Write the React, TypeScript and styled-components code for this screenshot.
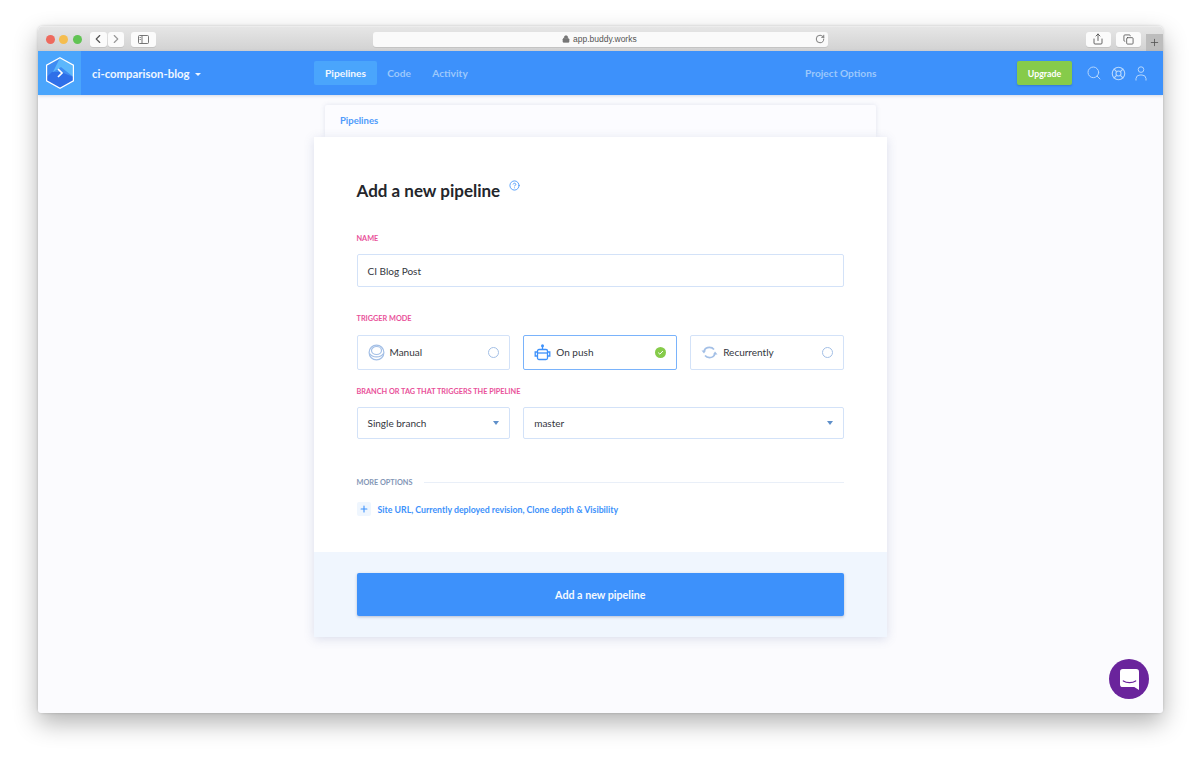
import React from "react";
import styled, { createGlobalStyle } from "styled-components";
import { ChevronLeft, ChevronRight, RotateCw, Search, LifeBuoy, Share, Copy, Plus, Lock, HelpCircle } from "lucide-react";

const GlobalStyle = createGlobalStyle`
  html, body {
    margin: 0;
    padding: 0;
    background: #fff;
  }
  body {
    font-family: Lato, "Liberation Sans", sans-serif;
  }
`;

const Stage = styled.div`
  width: 1200px;
  height: 762px;
  padding: 26px 37px 49px 38px;
  box-sizing: border-box;
  overflow: hidden;
`;

const WindowShadow = styled.div`
  height: 100%;
  border-radius: 5px;
  box-shadow: 0 10px 24px rgba(0, 0, 0, 0.3), 0 0 3px rgba(0, 0, 0, 0.18);
`;

const Window = styled.div`
  position: relative;
  height: 100%;
  display: flex;
  flex-direction: column;
  border-radius: 5px 5px 3px 3px;
  overflow: hidden;
  background: #fbfbfe;
`;

const TitleBar = styled.div`
  height: 25px;
  flex: none;
  display: flex;
  align-items: center;
  padding-left: 8px;
  box-sizing: border-box;
  background: linear-gradient(#e6e6e6, #d2d2d2);
  border-top: 1px solid #ececec;
`;

const Light = styled.span<{ $color: string }>`
  width: 9px;
  height: 9px;
  border-radius: 50%;
  background: ${(p) => p.$color};
  margin-right: 4.3px;
`;

const ToolGroup = styled.div<{ $ml: number }>`
  display: flex;
  gap: 1px;
  margin-left: ${(p) => p.$ml}px;
`;

const ToolButton = styled.div<{ $w: number }>`
  width: ${(p) => p.$w}px;
  height: 15px;
  background: #fbfbfb;
  border-radius: 3px;
  display: flex;
  align-items: center;
  justify-content: center;
  color: #555;
  box-shadow: 0 1px 0 rgba(0, 0, 0, 0.08);
`;

const AddressBar = styled.div`
  width: 455px;
  height: 15px;
  box-sizing: border-box;
  padding-right: 2px;
  margin-left: 217px;
  background: #fafafa;
  border-radius: 3px;
  position: relative;
  display: flex;
  align-items: center;
  justify-content: center;
  gap: 3px;
  font-family: "Liberation Sans", sans-serif;
  font-size: 8.5px;
  color: #555;
  box-shadow: 0 1px 0 rgba(0, 0, 0, 0.08);
`;

const Reload = styled.span`
  position: absolute;
  right: 3px;
  top: 2px;
  color: #666;
  display: flex;
`;

const NewTab = styled.div`
  width: 17px;
  height: 17px;
  align-self: flex-end;
  margin-left: 5px;
  background: #bdbdbd;
  color: #555;
  display: flex;
  align-items: center;
  justify-content: center;
`;

const Nav = styled.div`
  height: 44px;
  flex: none;
  background: #3d91fb;
  display: flex;
  align-items: center;
  color: #fff;
  box-shadow: 0 1px 3px rgba(40, 60, 110, 0.18);
  position: relative;
`;

const LogoBox = styled.div`
  width: 43px;
  height: 44px;
  background: #4aa5fc;
  display: flex;
  align-items: center;
  justify-content: center;
`;

const Project = styled.div`
  margin-left: 11px;
  width: 222px;
  font-size: 11.4px;
  font-weight: 700;
  display: flex;
  align-items: center;
  gap: 5px;
  color: #eef6ff;
`;

const Caret = styled.span`
  width: 0;
  height: 0;
  margin-top: 2px;
  border-left: 3px solid transparent;
  border-right: 3px solid transparent;
  border-top: 3px solid #eef6ff;
`;

const NavTab = styled.div<{ $active?: boolean; $w: number }>`
  width: ${(p) => p.$w}px;
  height: 24px;
  display: flex;
  align-items: center;
  justify-content: center;
  border-radius: 2px;
  font-size: 10.2px;
  font-weight: 700;
  background: ${(p) => (p.$active ? "#4aa5fc" : "transparent")};
  color: ${(p) => (p.$active ? "#f2f8ff" : "#9cc8fb")};
`;

const ProjectOptions = styled.div`
  margin-left: 326px;
  width: 71px;
  white-space: nowrap;
  font-size: 10.2px;
  font-weight: 700;
  color: #9cc8fb;
`;

const UpgradeButton = styled.div`
  width: 55px;
  height: 24px;
  margin-left: 141px;
  background: #86cb4a;
  border-radius: 2px;
  display: flex;
  align-items: center;
  justify-content: center;
  font-size: 8.8px;
  font-weight: 700;
  box-shadow: 0 1px 2px rgba(30, 50, 90, 0.25);
`;

const NavIcons = styled.div`
  display: flex;
  align-items: center;
  gap: 9px;
  margin-left: 14px;
  color: #b4d6fd;
`;

const Content = styled.div`
  flex: 1;
  display: flex;
  flex-direction: column;
  align-items: center;
  padding-top: 10px;
`;

const Crumb = styled.div`
  width: 551px;
  height: 32px;
  box-sizing: border-box;
  padding: 10px 15px 0;
  background: #fcfcff;
  font-size: 9.5px;
  font-weight: 700;
  color: #4f9bfb;
  border-radius: 2px 2px 0 0;
  box-shadow: 0 0 5px rgba(70, 90, 150, 0.14);
`;

const Card = styled.div`
  width: 573px;
  height: 500px;
  display: flex;
  flex-direction: column;
  background: #fff;
  box-shadow: 0 2px 10px rgba(70, 90, 150, 0.18);
  position: relative;
`;

const Form = styled.div`
  flex: 1;
  padding: 43px 43px 0 42.5px;
`;

const TitleRow = styled.div`
  display: flex;
  align-items: flex-start;
  gap: 9px;
  height: 22px;
  margin-bottom: 32px;
`;

const Title = styled.h1`
  margin: 0;
  font-size: 17px;
  line-height: 22px;
  font-weight: 700;
  color: #24262b;
`;

const HelpIcon = styled.span`
  color: #4f9bfb;
  display: flex;
`;

const Label = styled.div<{ $mb?: number }>`
  font-size: 7.3px;
  line-height: 9px;
  font-weight: 700;
  color: #e9519a;
  text-transform: uppercase;
  margin-bottom: ${(p) => p.$mb ?? 11}px;
`;

const InputBox = styled.div`
  height: 33px;
  box-sizing: border-box;
  padding: 0 10px;
  display: flex;
  align-items: center;
  border: 1px solid #d3e2f8;
  border-radius: 2px;
  font-size: 10px;
  color: #33363d;
  margin-bottom: 27px;
`;

const ModeRow = styled.div`
  display: grid;
  grid-template-columns: repeat(3, 1fr);
  gap: 13px;
  margin-bottom: 17px;
`;

const ModeCard = styled.div<{ $selected?: boolean }>`
  height: 35px;
  box-sizing: border-box;
  padding: 0 10px;
  display: flex;
  align-items: center;
  gap: 5px;
  border: 1px solid ${(p) => (p.$selected ? "#7ab3fb" : "#d3e2f8")};
  border-radius: 2px;
  font-size: 10px;
  color: #33363d;
`;

const ModeLabel = styled.span`
  margin-bottom: 2px;
`;

const ModeIcon = styled.span`
  width: 17px;
  height: 17px;
  display: flex;
`;

const Radio = styled.span`
  margin-left: auto;
  width: 9px;
  height: 9px;
  border: 1px solid #a3bfe6;
  border-radius: 50%;
`;

const Checked = styled.span`
  margin-left: auto;
  display: flex;
`;

const BranchRow = styled.div`
  display: grid;
  grid-template-columns: 153.67px 1fr;
  gap: 13px;
  margin-bottom: 39px;
`;

const SelectBox = styled.div`
  height: 32px;
  box-sizing: border-box;
  padding: 0 10px;
  display: flex;
  align-items: center;
  justify-content: space-between;
  border: 1px solid #d3e2f8;
  border-radius: 2px;
  font-size: 10px;
  color: #33363d;
`;

const SelectCaret = styled.span`
  width: 0;
  height: 0;
  border-left: 3px solid transparent;
  border-right: 3px solid transparent;
  border-top: 4px solid #5f8fc9;
`;

const MoreRow = styled.div`
  display: flex;
  align-items: center;
  gap: 12px;
  font-size: 7.3px;
  font-weight: 700;
  color: #8396b6;
  margin-bottom: 15px;
`;

const Rule = styled.span`
  flex: 1;
  height: 1px;
  background: #e9eff8;
`;

const OptionsRow = styled.div`
  display: flex;
  align-items: center;
  gap: 7px;
  font-size: 8.75px;
  font-weight: 700;
  color: #3d91fb;
`;

const PlusBox = styled.span`
  width: 14px;
  height: 14px;
  background: #eff6fe;
  border-radius: 2px;
  display: flex;
  align-items: center;
  justify-content: center;
`;

const Footer = styled.div`
  height: 85px;
  box-sizing: border-box;
  padding: 21px 43px 0 42.5px;
  background: #f0f6fe;
`;

const SubmitButton = styled.div`
  height: 43px;
  background: #3d91fb;
  border-radius: 2px;
  display: flex;
  align-items: center;
  justify-content: center;
  color: #f4f9ff;
  font-size: 10.7px;
  font-weight: 700;
  box-shadow: 0 1px 3px rgba(40, 60, 110, 0.3);
`;

const ChatBubble = styled.div`
  position: absolute;
  right: 14px;
  bottom: 14px;
  width: 40px;
  height: 40px;
  border-radius: 50%;
  background: #6a249c;
  display: flex;
  align-items: center;
  justify-content: center;
`;

const hexagon = "M15 .8 28.4 8.2V23.8L15 31.2 1.6 23.8V8.2Z";

function BuddyLogo() {
  return (
    <svg width="30" height="32" viewBox="0 0 30 32">
      <path d={hexagon} fill="#3f8cf2" />
      <path d="M15 .8 28.4 8.2V20L16 10 8 15Z" fill="#5cb7fc" />
      <path d="M1.6 23.8 15 31.2 28.4 23.8V20L16 15 7 15 1.6 20Z" fill="#2f6fe8" />
      <path d={hexagon} fill="none" stroke="#fff" strokeWidth="1.2" />
      <path d="M13 12 17 16 13 20" fill="none" stroke="#fff" strokeWidth="1.7" />
    </svg>
  );
}

function ManualIcon() {
  return (
    <svg width="17" height="17" viewBox="0 0 17 17" fill="none" stroke="#a3bfe6" strokeWidth="1.2">
      <circle cx="8.5" cy="8.5" r="7.4" />
      <ellipse cx="8.5" cy="6.5" rx="5" ry="4" />
      <path d="M1.5 9.5c1.5 2.4 4 3.4 7 3.4s5.5-1 7-3.4" />
    </svg>
  );
}

function RobotIcon() {
  return (
    <svg width="17" height="17" viewBox="0 0 17 17" fill="none" stroke="#3d91fb" strokeWidth="1.3">
      <circle cx="8.5" cy="1.8" r="1.5" fill="#3d91fb" stroke="none" />
      <path d="M8.5 3v2.5" />
      <rect x="3.5" y="5.5" width="10" height="10" rx="1.5" />
      <path d="M3.5 8H1.2v4h2.3M13.5 8h2.3v4h-2.3" />
      <path d="M3.5 9h10" />
    </svg>
  );
}

function RecurringIcon() {
  return (
    <svg width="17" height="17" viewBox="0 0 17 17" fill="none" stroke="#a3bfe6" strokeWidth="1.6">
      <path d="M3 7c.8-2.2 2.9-3.6 5.5-3.6 1.9 0 3.5.8 4.5 2.1" />
      <path d="M14 10c-.8 2.2-2.9 3.6-5.5 3.6-1.9 0-3.5-.8-4.5-2.1" />
      <path d="M0.5 6.5h4.5L3 9.5Z" fill="#a3bfe6" stroke="none" />
      <path d="M16.5 10.5H12l2-3Z" fill="#a3bfe6" stroke="none" />
    </svg>
  );
}

function CheckedIcon() {
  return (
    <svg width="11" height="11" viewBox="0 0 11 11">
      <circle cx="5.5" cy="5.5" r="5.5" fill="#86cb4a" />
      <path d="M3.2 5.6 4.9 7.2 7.9 4" fill="none" stroke="#fff" strokeWidth="1" />
    </svg>
  );
}

function SidebarIcon() {
  return (
    <svg width="11" height="9" viewBox="0 0 11 9" fill="none" stroke="#666" strokeWidth="0.9">
      <rect x="0.5" y="0.5" width="10" height="8" rx="1" />
      <path d="M4 .5v8" />
      <path d="M1.5 2.5h1.5M1.5 4.5h1.5" strokeWidth="0.7" />
    </svg>
  );
}

function PersonIcon() {
  return (
    <svg width="12" height="15" viewBox="0 0 12 15" fill="none" stroke="currentColor" strokeWidth="1">
      <circle cx="6" cy="3.6" r="2.8" />
      <path d="M1 14.5V12.5a4 4 0 0 1 4-3.5h2a4 4 0 0 1 4 3.5v2" />
    </svg>
  );
}

function ChatIcon() {
  return (
    <svg width="19" height="21" viewBox="0 0 20 22">
      <path d="M3 0h14a3 3 0 0 1 3 3v19l-5-3H3a3 3 0 0 1-3-3V3a3 3 0 0 1 3-3Z" fill="#fff" />
      <path d="M3.5 12.5c3.6 2.4 9.4 2.4 13 0" fill="none" stroke="#6a249c" strokeWidth="1.3" strokeLinecap="round" />
    </svg>
  );
}

export default function App() {
  return (
    <Stage>
      <GlobalStyle />
      <WindowShadow>
        <Window>
          <TitleBar>
            <Light $color="#ee6a5e" />
            <Light $color="#f5bd4f" />
            <Light $color="#61c454" />
            <ToolGroup $ml={4}>
              <ToolButton $w={17}><ChevronLeft size={14} strokeWidth={2} /></ToolButton>
              <ToolButton $w={16}><ChevronRight size={14} strokeWidth={2} color="#999" /></ToolButton>
            </ToolGroup>
            <ToolGroup $ml={7}>
              <ToolButton $w={25}><SidebarIcon /></ToolButton>
            </ToolGroup>
            <AddressBar>
              <Lock size={8} fill="#777" color="#777" />
              app.buddy.works
              <Reload><RotateCw size={10} strokeWidth={2} /></Reload>
            </AddressBar>
            <ToolGroup $ml={258}>
              <ToolButton $w={25}><Share size={12} strokeWidth={1.8} /></ToolButton>
            </ToolGroup>
            <ToolGroup $ml={5}>
              <ToolButton $w={25}><Copy size={11} strokeWidth={1.8} /></ToolButton>
            </ToolGroup>
            <NewTab><Plus size={11} strokeWidth={1.8} /></NewTab>
          </TitleBar>
          <Nav>
            <LogoBox><BuddyLogo /></LogoBox>
            <Project>
              ci-comparison-blog
              <Caret />
            </Project>
            <NavTab $active $w={63}>Pipelines</NavTab>
            <NavTab $w={44}>Code</NavTab>
            <NavTab $w={58}>Activity</NavTab>
            <ProjectOptions>Project Options</ProjectOptions>
            <UpgradeButton>Upgrade</UpgradeButton>
            <NavIcons>
              <Search size={16} strokeWidth={1.5} />
              <LifeBuoy size={15} strokeWidth={1.8} />
              <PersonIcon />
            </NavIcons>
          </Nav>
          <Content>
            <Crumb>Pipelines</Crumb>
            <Card>
              <Form>
                <TitleRow>
                  <Title>Add a new pipeline</Title>
                  <HelpIcon><HelpCircle size={11} strokeWidth={2} /></HelpIcon>
                </TitleRow>
                <Label>Name</Label>
                <InputBox>CI Blog Post</InputBox>
                <Label $mb={12}>Trigger mode</Label>
                <ModeRow>
                  <ModeCard>
                    <ModeIcon><ManualIcon /></ModeIcon>
                    <ModeLabel>Manual</ModeLabel>
                    <Radio />
                  </ModeCard>
                  <ModeCard $selected>
                    <ModeIcon><RobotIcon /></ModeIcon>
                    <ModeLabel>On push</ModeLabel>
                    <Checked><CheckedIcon /></Checked>
                  </ModeCard>
                  <ModeCard>
                    <ModeIcon><RecurringIcon /></ModeIcon>
                    <ModeLabel>Recurrently</ModeLabel>
                    <Radio />
                  </ModeCard>
                </ModeRow>
                <Label>Branch or tag that triggers the pipeline</Label>
                <BranchRow>
                  <SelectBox>Single branch<SelectCaret /></SelectBox>
                  <SelectBox>master<SelectCaret /></SelectBox>
                </BranchRow>
                <MoreRow>
                  MORE OPTIONS
                  <Rule />
                </MoreRow>
                <OptionsRow>
                  <PlusBox><Plus size={10} strokeWidth={2.6} /></PlusBox>
                  Site URL, Currently deployed revision, Clone depth &amp; Visibility
                </OptionsRow>
              </Form>
              <Footer>
                <SubmitButton>Add a new pipeline</SubmitButton>
              </Footer>
            </Card>
          </Content>
          <ChatBubble><ChatIcon /></ChatBubble>
        </Window>
      </WindowShadow>
    </Stage>
  );
}
